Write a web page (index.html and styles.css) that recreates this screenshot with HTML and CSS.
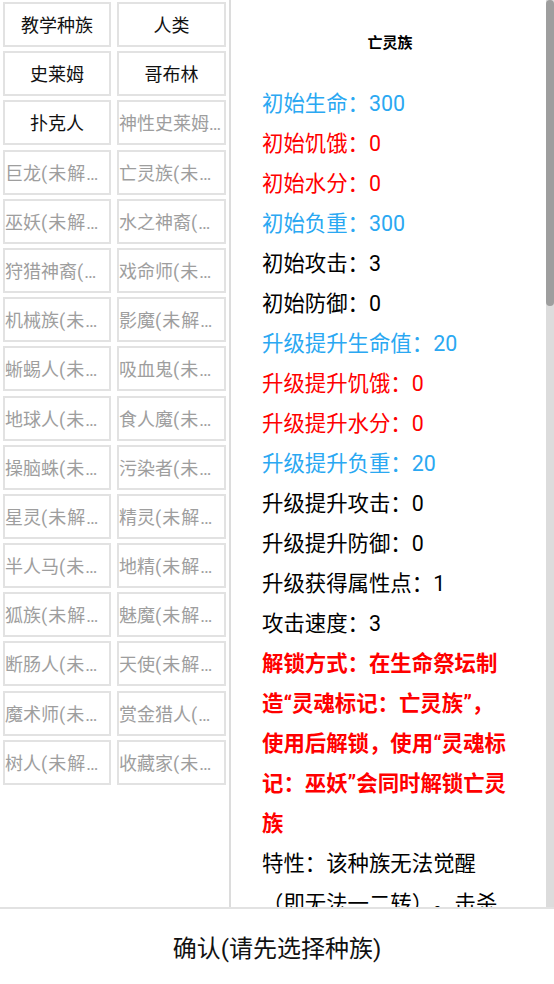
FILE: index.html
```html
<!DOCTYPE html>
<html lang="zh">
<head>
<meta charset="utf-8">
<title>选择种族</title>
<link rel="stylesheet" href="styles.css">
</head>
<body>
<div class="app">
  <div class="main">
    <div class="race-list">
      <div class="race">教学种族</div>
      <div class="race">人类</div>
      <div class="race">史莱姆</div>
      <div class="race">哥布林</div>
      <div class="race">扑克人</div>
      <div class="race locked">神性史莱姆<span class="tag">(未解锁)</span></div>
      <div class="race locked">巨龙<span class="tag">(未解锁)</span></div>
      <div class="race locked">亡灵族<span class="tag">(未解锁)</span></div>
      <div class="race locked">巫妖<span class="tag">(未解锁)</span></div>
      <div class="race locked">水之神裔<span class="tag">(未解锁)</span></div>
      <div class="race locked">狩猎神裔<span class="tag">(未解锁)</span></div>
      <div class="race locked">戏命师<span class="tag">(未解锁)</span></div>
      <div class="race locked">机械族<span class="tag">(未解锁)</span></div>
      <div class="race locked">影魔<span class="tag">(未解锁)</span></div>
      <div class="race locked">蜥蜴人<span class="tag">(未解锁)</span></div>
      <div class="race locked">吸血鬼<span class="tag">(未解锁)</span></div>
      <div class="race locked">地球人<span class="tag">(未解锁)</span></div>
      <div class="race locked">食人魔<span class="tag">(未解锁)</span></div>
      <div class="race locked">操脑蛛<span class="tag">(未解锁)</span></div>
      <div class="race locked">污染者<span class="tag">(未解锁)</span></div>
      <div class="race locked">星灵<span class="tag">(未解锁)</span></div>
      <div class="race locked">精灵<span class="tag">(未解锁)</span></div>
      <div class="race locked">半人马<span class="tag">(未解锁)</span></div>
      <div class="race locked">地精<span class="tag">(未解锁)</span></div>
      <div class="race locked">狐族<span class="tag">(未解锁)</span></div>
      <div class="race locked">魅魔<span class="tag">(未解锁)</span></div>
      <div class="race locked">断肠人<span class="tag">(未解锁)</span></div>
      <div class="race locked">天使<span class="tag">(未解锁)</span></div>
      <div class="race locked">魔术师<span class="tag">(未解锁)</span></div>
      <div class="race locked">赏金猎人<span class="tag">(未解锁)</span></div>
      <div class="race locked">树人<span class="tag">(未解锁)</span></div>
      <div class="race locked">收藏家<span class="tag">(未解锁)</span></div>
    </div>
    <div class="detail">
      <div class="detail-body">
        <div class="title">亡灵族</div>
        <div class="line blue">初始生命：300</div>
        <div class="line red">初始饥饿：0</div>
        <div class="line red">初始水分：0</div>
        <div class="line blue">初始负重：300</div>
        <div class="line">初始攻击：3</div>
        <div class="line">初始防御：0</div>
        <div class="line blue">升级提升生命值：20</div>
        <div class="line red">升级提升饥饿：0</div>
        <div class="line red">升级提升水分：0</div>
        <div class="line blue">升级提升负重：20</div>
        <div class="line">升级提升攻击：0</div>
        <div class="line">升级提升防御：0</div>
        <div class="line">升级获得属性点：1</div>
        <div class="line">攻击速度：3</div>
        <div class="line red bold">解锁方式：在生命祭坛制造“灵魂标记：亡灵族”，使用后解锁，使用“灵魂标记：巫妖”会同时解锁亡灵族</div>
        <div class="line">特性：该种族无法觉醒（即无法一二转）。击杀敌人时恢复少量生命值，不需要进食和饮水。</div>
      </div>
      <div class="scrollbar"><div class="thumb"></div></div>
    </div>
  </div>
  <div class="footer">确认(请先选择种族)</div>
</div>
</body>
</html>
```
FILE: styles.css
```css
html, body {
  margin: 0;
  padding: 0;
  background: #fff;
}
body {
  font-family: Roboto, "Noto Sans CJK SC", sans-serif;
  color: #000;
  text-spacing-trim: space-all;
}
.app {
  width: 554px;
  height: 984px;
  display: flex;
  flex-direction: column;
  overflow: hidden;
}
.main {
  height: 907px;
  display: flex;
  overflow: hidden;
}
.race-list {
  width: 223px;
  flex: none;
  padding: 2px 3px 0 3px;
  border-right: 2px solid #dcdcdc;
  display: grid;
  grid-template-columns: 108px 109px;
  grid-auto-rows: 45px;
  column-gap: 6px;
  row-gap: 4.2px;
  align-content: start;
}
.race {
  box-sizing: border-box;
  border: 2px solid #e2e2e2;
  font-size: 18px;
  line-height: 43px;
  text-align: center;
  white-space: nowrap;
  overflow: hidden;
  text-overflow: ellipsis;
  color: #111;
}
.race.locked {
  color: #9e9e9e;
}
.tag {
  letter-spacing: 1px;
}
.detail {
  flex: 1;
  position: relative;
  overflow: hidden;
}
.detail-body {
  width: 251px;
  padding: 23px 40px 0 31px;
}
.title {
  font-size: 15px;
  font-weight: bold;
  line-height: 40px;
  text-align: center;
  margin-bottom: 21px;
  padding-left: 5px;
}
.line {
  font-size: 21.4px;
  line-height: 40px;
}
.blue {
  color: #2aa8f2;
}
.red {
  color: #ff0000;
}
.bold {
  font-weight: bold;
}
.scrollbar {
  position: absolute;
  top: 0;
  right: 0;
  width: 8px;
  height: 100%;
  background: #dcdcdc;
}
.thumb {
  height: 306px;
  background: #9e9e9e;
  border-radius: 4px;
}
.footer {
  flex: 1;
  border-top: 2px solid #e2e2e2;
  display: flex;
  align-items: center;
  justify-content: center;
  font-size: 24px;
  color: #111;
}
```
